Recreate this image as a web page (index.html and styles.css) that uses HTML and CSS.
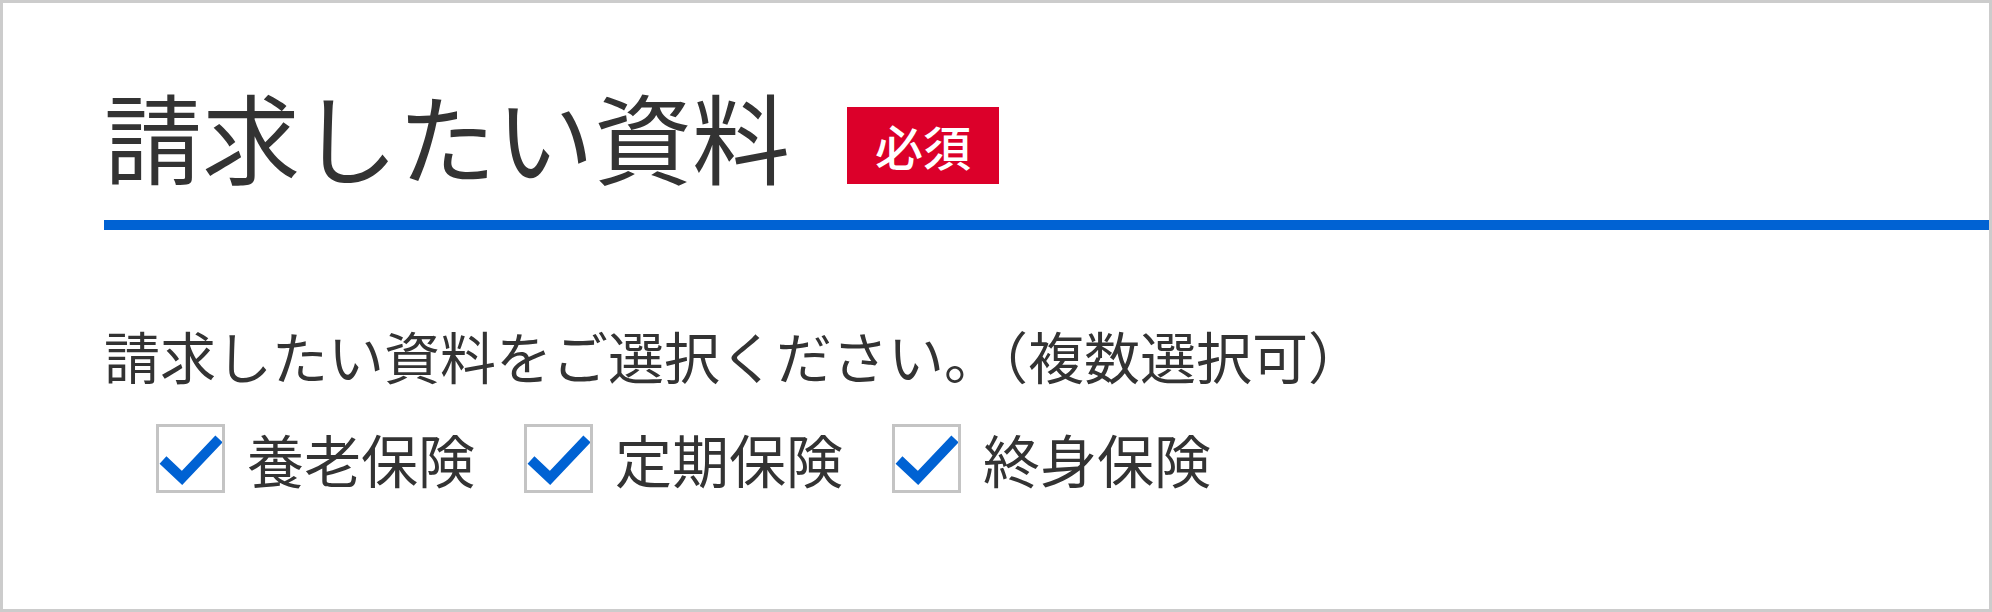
FILE: index.html
```html
<!DOCTYPE html>
<html lang="ja">
<head>
<meta charset="utf-8">
<title>請求したい資料</title>
<link rel="stylesheet" href="styles.css">
</head>
<body>
<div class="frame">
  <div class="head">
    <h1 class="title">請求したい資料</h1>
    <span class="badge">必須</span>
  </div>
  <p class="lead">請求したい資料をご選択ください。（複数選択可）</p>
  <div class="options">
    <label class="opt"><span class="box"><svg viewBox="0 0 63 63" class="check"><polyline points="4,33 23,51 60,12"/></svg></span><span class="txt">養老保険</span></label>
    <label class="opt"><span class="box"><svg viewBox="0 0 63 63" class="check"><polyline points="4,33 23,51 60,12"/></svg></span><span class="txt">定期保険</span></label>
    <label class="opt"><span class="box"><svg viewBox="0 0 63 63" class="check"><polyline points="4,33 23,51 60,12"/></svg></span><span class="txt">終身保険</span></label>
  </div>
</div>
</body>
</html>
```
FILE: styles.css
```css
html, body {
  margin: 0;
  padding: 0;
  background: #fff;
}
body {
  font-family: "Noto Sans CJK JP", "Noto Sans", sans-serif;
  color: #333;
}
.frame {
  box-sizing: border-box;
  width: 1992px;
  height: 612px;
  border: 3px solid #cccccc;
  padding: 82px 0 0 101px;
}
.head {
  display: flex;
  align-items: flex-end;
  padding-bottom: 37px;
  border-bottom: 10px solid #0062d3;
}
.title {
  margin: 0;
  font-size: 98px;
  line-height: 1;
  font-weight: 400;
}
.badge {
  margin-left: 57px;
  background: #dc002a;
  color: #fff;
  font-size: 48px;
  font-weight: 500;
  line-height: 1;
  padding: 14px 28px 15px;
  margin-bottom: -1px;
}
.lead {
  margin: 97px 0 0;
  font-size: 56px;
  line-height: 1;
}
.options {
  display: flex;
  align-items: center;
  margin-top: 41px;
  padding-left: 52px;
}
.opt {
  display: flex;
  align-items: center;
  margin-right: 49px;
}
.box {
  box-sizing: border-box;
  width: 69px;
  height: 69px;
  border: 3px solid #c4c4c4;
  display: block;
}
.check {
  display: block;
  width: 63px;
  height: 63px;
  fill: none;
  stroke: #0062d3;
  stroke-width: 10;
}
.txt {
  margin-left: 22px;
  font-size: 57px;
  line-height: 1;
}
```
